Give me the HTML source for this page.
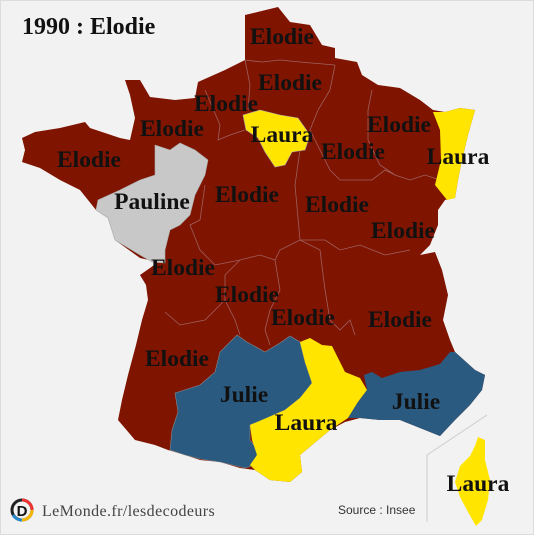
<!DOCTYPE html>
<html><head><meta charset="utf-8"><style>
html,body{margin:0;padding:0;background:#f2f2f2;}
svg{display:block}
.l{font-family:"Liberation Serif",serif;font-weight:bold;font-size:23.5px;fill:#111;text-anchor:middle;dominant-baseline:central}
</style></head><body>
<svg width="534" height="535" viewBox="0 0 534 535" xmlns="http://www.w3.org/2000/svg">
<rect x="0.5" y="0.5" width="533" height="534" fill="#f2f2f2" stroke="#dcdcdc"/>
<polygon fill="#7f1400" points="245,15 278,7 290,22 310,25 322,45 335,48 335,58 357,62 362,75 378,85 400,88 420,100 433,110 445,112 460,108 475,110 468,135 462,160 458,180 455,198 445,200 438,210 438,225 430,245 420,255 435,252 442,270 448,295 443,320 450,340 455,352 475,370 485,375 482,390 470,405 455,420 440,436 420,428 400,420 380,420 360,418 345,422 330,430 318,440 300,455 302,472 290,482 270,480 255,470 240,468 220,462 200,460 185,455 168,450 155,445 135,440 118,420 122,400 128,375 136,345 142,320 148,300 146,285 140,275 150,268 158,262 140,258 115,240 108,218 96,210 80,190 60,180 40,168 22,162 25,150 22,138 35,132 60,128 85,122 90,128 120,138 130,140 135,118 130,95 125,80 140,80 150,97 175,100 195,98 198,82 225,70 245,60"/>
<g fill="none" stroke="#a06060" stroke-width="0.8">
<polyline points="245,60 262,62 280,60 300,62 335,65"/>
<polyline points="245,60 250,85 248,110"/>
<polyline points="205,90 220,125 218,140 230,135 245,130"/>
<polyline points="310,130 320,150 330,170 340,180 372,180 385,170 395,175"/>
<polyline points="335,65 330,90 318,110 310,130"/>
<polyline points="372,90 368,110 368,140 380,165 395,175 410,180 425,175 440,180"/>
<polyline points="300,150 295,185 300,240 325,240 340,250 360,245 385,255 410,250"/>
<polyline points="205,185 200,220 190,225 200,250 215,265 240,260 260,255 275,260 280,250 300,240"/>
<polyline points="275,260 280,290 270,310 265,330 270,345"/>
<polyline points="240,260 225,275 225,300 205,320 180,325 165,312"/>
<polyline points="225,300 235,320 240,335"/>
<polyline points="300,240 320,250 325,290 330,320 340,330 350,320 355,335"/>
</g>
<polygon fill="#c8c8c8" stroke="#aaa" stroke-width="0.6" points="155,145 170,150 180,143 195,150 208,160 205,175 195,195 190,215 180,225 170,230 165,250 165,263 152,262 140,255 115,240 108,218 96,210 98,200 120,190 140,180 155,175"/>
<polygon fill="#ffe500" stroke="#aaa" stroke-width="0.6" points="243,115 260,110 280,115 298,118 310,135 305,150 292,152 285,165 275,167 265,152 258,138 246,130"/>
<polygon fill="#ffe500" points="433,112 445,112 460,108 475,110 468,135 462,160 458,180 455,198 447,200 435,185 441,160 440,130"/>
<polygon fill="#2a5a80" stroke="#888" stroke-width="0.6" points="175,393 200,385 215,372 220,352 237,335 247,342 265,352 280,343 290,336 300,342 305,362 312,383 300,398 285,410 262,420 250,425 250,440 258,450 255,465 245,468 220,462 200,459 185,455 170,450 172,430 178,412"/>
<polygon fill="#ffe500" points="300,342 310,338 322,345 332,346 345,372 360,378 367,390 358,402 348,418 330,430 318,440 300,455 302,472 290,482 270,480 255,470 250,465 257,455 252,440 250,425 262,420 285,410 300,398 312,383 305,362"/>
<polygon fill="#2a5a80" points="367,390 364,375 372,372 382,378 400,372 420,370 440,364 450,352 455,352 475,370 485,375 482,390 470,405 455,420 440,436 420,428 400,420 380,420 360,418 348,418 358,402"/>
<polyline points="427,522 427,455 487,415" fill="none" stroke="#ccc" stroke-width="1"/>
<polygon fill="#ffe500" points="478,437 485,440 485,460 490,480 488,500 482,520 476,526 468,512 460,497 455,482 460,466 470,456 475,446"/>
<text x="22" y="34" style="font-family:'Liberation Serif',serif;font-weight:bold;font-size:24px;fill:#111">1990 : Elodie</text>
<g>
<text class="l" x="282" y="37">Elodie</text>
<text class="l" x="290" y="83">Elodie</text>
<text class="l" x="226" y="104">Elodie</text>
<text class="l" x="172" y="129">Elodie</text>
<text class="l" x="89" y="160">Elodie</text>
<text class="l" x="152" y="202">Pauline</text>
<text class="l" x="282" y="135">Laura</text>
<text class="l" x="353" y="152">Elodie</text>
<text class="l" x="399" y="125">Elodie</text>
<text class="l" x="458" y="157">Laura</text>
<text class="l" x="247" y="195">Elodie</text>
<text class="l" x="337" y="205">Elodie</text>
<text class="l" x="403" y="231">Elodie</text>
<text class="l" x="183" y="268">Elodie</text>
<text class="l" x="247" y="295">Elodie</text>
<text class="l" x="303" y="318">Elodie</text>
<text class="l" x="400" y="320">Elodie</text>
<text class="l" x="177" y="359">Elodie</text>
<text class="l" x="244" y="395">Julie</text>
<text class="l" x="306" y="423">Laura</text>
<text class="l" x="416" y="402">Julie</text>
<text class="l" x="478" y="484">Laura</text>
</g>
<circle cx="22" cy="510" r="10" fill="none" stroke="#222" stroke-width="3"/>
<path d="M22 500 A10 10 0 0 1 32 510" fill="none" stroke="#e33" stroke-width="3"/>
<path d="M32 510 A10 10 0 0 1 22 520" fill="none" stroke="#f5b800" stroke-width="3"/>
<path d="M22 520 A10 10 0 0 1 13 515" fill="none" stroke="#2a8ad0" stroke-width="3"/>
<text x="22" y="516" text-anchor="middle" style="font-family:'Liberation Sans',sans-serif;font-weight:bold;font-size:15px;fill:#111">D</text>
<text x="42" y="516" style="font-family:'Liberation Serif',serif;font-size:16px;fill:#444;letter-spacing:0.4px">LeMonde.fr/lesdecodeurs</text>
<text x="338" y="514" style="font-family:'Liberation Sans',sans-serif;font-size:12px;fill:#333">Source : Insee</text>
</svg>
</body></html>
